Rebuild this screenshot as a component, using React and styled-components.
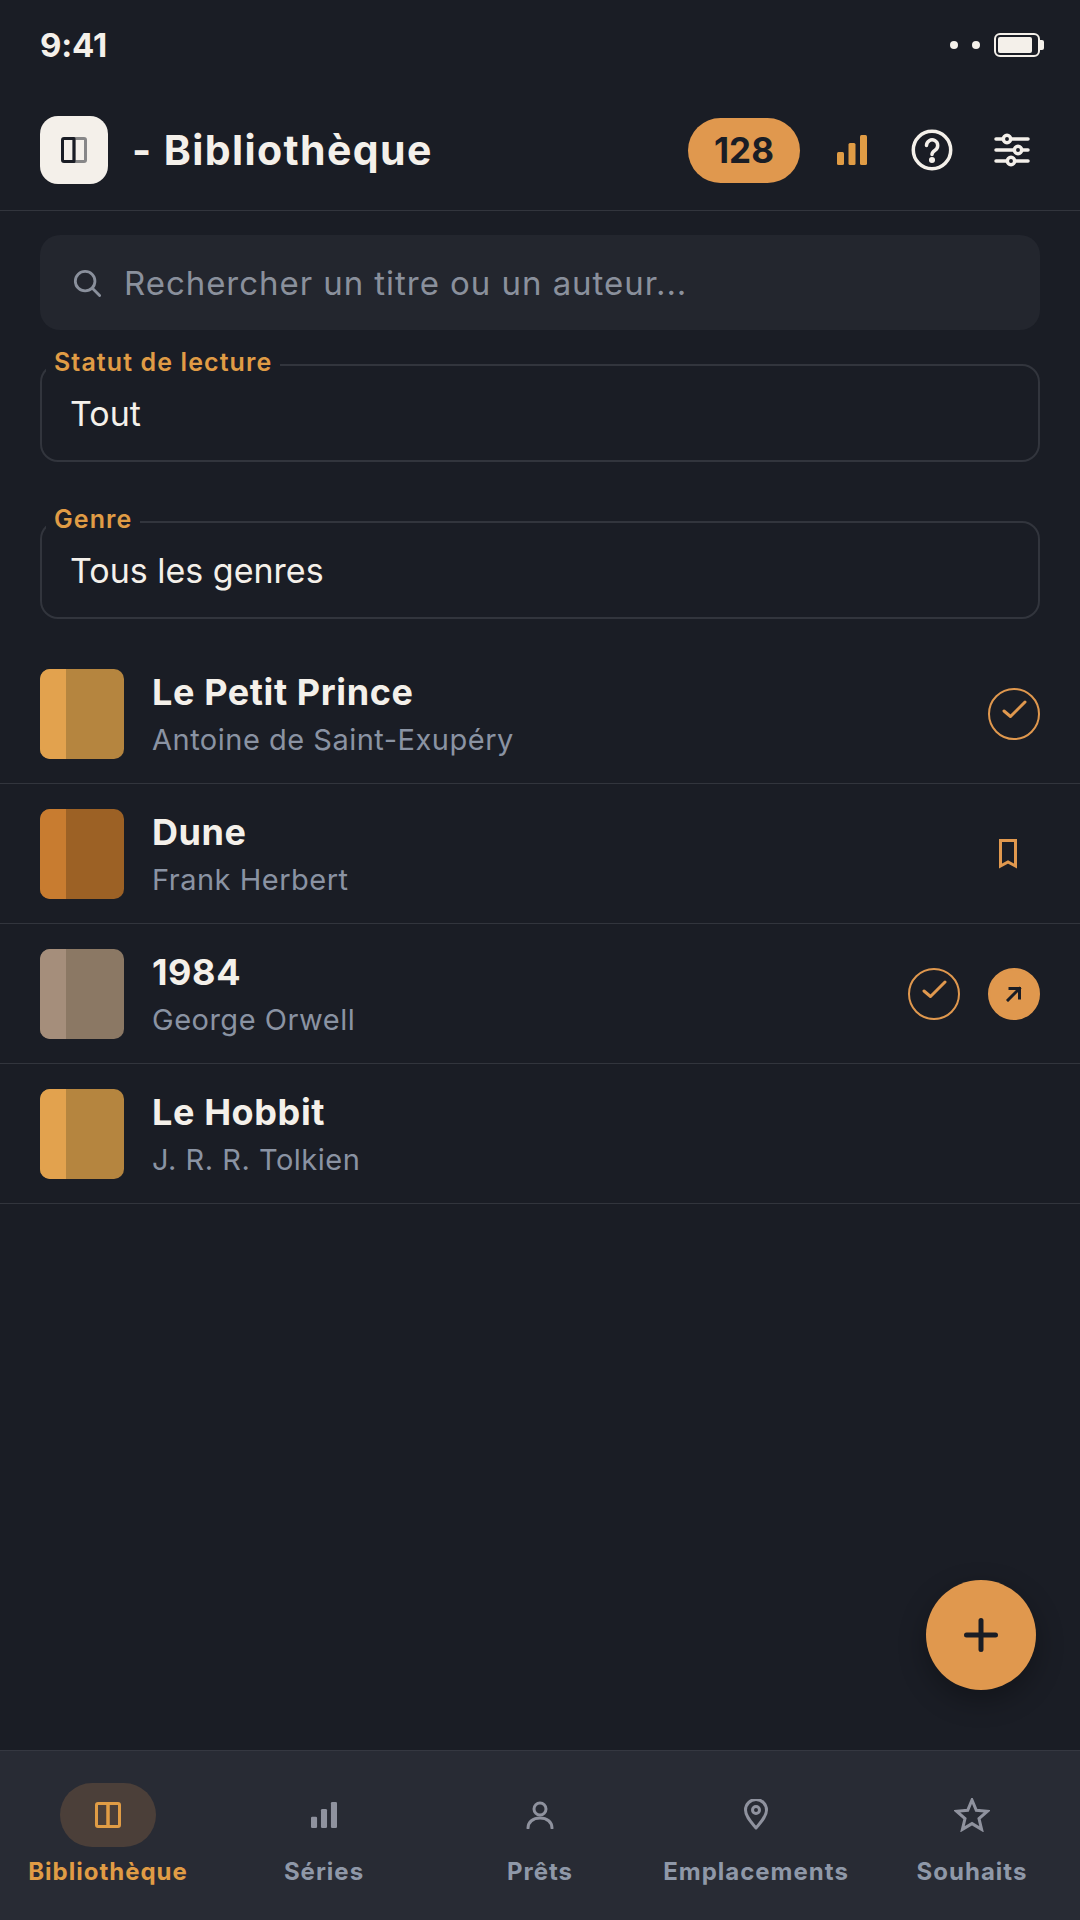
import React from 'react'
import styled, { createGlobalStyle } from 'styled-components'

const GlobalStyle = createGlobalStyle`
html, body {
    margin: 0;
    padding: 0;
    background: #1a1d25;
}
* {
    box-sizing: border-box;
}
`

const Screen = styled.div`
position: relative;
width: 1080px;
height: 1920px;
display: flex;
flex-direction: column;
overflow: hidden;
background-color: #1a1d25;
color: #f4f0ea;
font-family: Inter, "Noto Sans", sans-serif;
`

const StatusBar = styled.div`
height: 90px;
padding: 0 40px;
display: flex;
align-items: center;
justify-content: space-between;
`
const Time = styled.span`
font-size: 33px;
font-weight: 700;
letter-spacing: -0.2px;
`
const StatusRight = styled.div`
display: flex;
align-items: center;
gap: 14px;
`
const Dot = styled.span`
width: 8px;
height: 8px;
border-radius: 50%;
background-color: #f4f0ea;
`
const Battery = styled.span`
position: relative;
width: 46px;
height: 24px;
padding: 2px;
border: 2px solid #f4f0ea;
border-radius: 6px;
&::before {
    content: '';
    display: block;
    height: 100%;
    width: 34px;
    border-radius: 2px;
    background-color: #f4f0ea;
}
&::after {
    content: '';
    position: absolute;
    top: 5px;
    right: -6px;
    width: 4px;
    height: 10px;
    border-radius: 0 2px 2px 0;
    background-color: #f4f0ea;
}
`

const Header = styled.header`
height: 121px;
padding: 26px 40px 0;
display: flex;
align-items: flex-start;
border-bottom: 1px solid #32353d;
`
const Logo = styled.div`
width: 68px;
height: 68px;
border-radius: 18px;
display: flex;
align-items: center;
justify-content: center;
background-color: #f4f0ea;
`
const PageTitle = styled.h1`
flex: 1;
margin: 0 0 0 24px;
font-size: 41px;
line-height: 68px;
font-weight: 700;
letter-spacing: 1.4px;
`
const HeaderActions = styled.div`
display: flex;
align-items: center;
gap: 24px;
height: 68px;
`
const CountPill = styled.div`
width: 112px;
height: 65px;
border-radius: 33px;
display: flex;
align-items: center;
justify-content: center;
background-color: #e0984e;
color: #1a1d25;
font-size: 35px;
font-weight: 700;
`
const IconButton = styled.div`
width: 56px;
height: 56px;
display: flex;
align-items: center;
justify-content: center;
`

const Filters = styled.section`
padding: 24px 40px 25px;
display: flex;
flex-direction: column;
`
const Search = styled.div`
height: 95px;
margin-bottom: 20px;
padding: 0 33px;
display: flex;
align-items: center;
gap: 23px;
border-radius: 20px;
background-color: #23262e;
color: #8a909c;
font-size: 33px;
letter-spacing: 0.95px;
`
const Field = styled.fieldset`
margin: 0;
padding: 0 0 14px;
border: 2px solid #32353d;
border-radius: 18px;
& + & {
    margin-top: 45px;
}
`
const FieldLabel = styled.legend`
margin-left: 4px;
padding: 0 8px 6px;
font-size: 25px;
line-height: 24px;
font-weight: 600;
letter-spacing: 1.1px;
color: #e09c45;
`
const FieldValue = styled.div`
height: 66px;
padding-left: 28px;
display: flex;
align-items: center;
font-size: 34px;
color: #f4f0ea;
`

const BookList = styled.ul`
margin: 0;
padding: 0;
list-style: none;
`
const BookRow = styled.li`
height: 140px;
padding: 0 40px;
display: flex;
align-items: center;
gap: 28px;
border-bottom: 1px solid #32353d;
`
const Cover = styled.div`
width: 84px;
height: 90px;
flex-shrink: 0;
border-radius: 10px;
overflow: hidden;
display: flex;
background-color: ${props => props.$back};
&::before {
    content: '';
    width: 26px;
    background-color: ${props => props.$spine};
}
`
const BookText = styled.div`
flex: 1;
margin-top: 3px;
display: flex;
flex-direction: column;
gap: 4px;
`
const BookTitle = styled.div`
font-size: 36px;
line-height: 46px;
font-weight: 700;
letter-spacing: 0.6px;
`
const BookAuthor = styled.div`
font-size: 29px;
line-height: 42px;
letter-spacing: 0.5px;
color: #8a93a3;
`
const BookActions = styled.div`
display: flex;
align-items: center;
gap: 28px;
`
const RoundAction = styled.div`
width: 52px;
height: 52px;
border-radius: 50%;
display: flex;
align-items: center;
justify-content: center;
border: 2px solid #e0984e;
background-color: ${props => props.$filled ? '#e0984e' : 'transparent'};
`
const PlainAction = styled.div`
width: 64px;
height: 52px;
display: flex;
align-items: center;
justify-content: center;
`

const Fab = styled.button`
position: absolute;
right: 44px;
bottom: 230px;
width: 110px;
height: 110px;
padding: 0;
border: none;
border-radius: 50%;
display: flex;
align-items: center;
justify-content: center;
background-color: #e0984e;
box-shadow: 0 10px 28px rgba(0, 0, 0, 0.3);
`

const TabBar = styled.nav`
margin-top: auto;
height: 170px;
padding-top: 32px;
display: grid;
grid-template-columns: repeat(5, 216px);
border-top: 1px solid #353841;
background-color: #282b34;
`
const Tab = styled.div`
display: flex;
flex-direction: column;
align-items: center;
color: ${props => props.$active ? '#e09c45' : '#8f98a8'};
font-size: 24px;
line-height: 30px;
font-weight: 700;
letter-spacing: 1px;
white-space: nowrap;
`
const TabIcon = styled.div`
width: 96px;
height: 64px;
margin-bottom: 10px;
border-radius: 32px;
display: flex;
align-items: center;
justify-content: center;
background-color: ${props => props.$active ? '#4b3f39' : 'transparent'};
`

const SplitBook = ({ color, faded }) => (
    <svg width="28" height="28" viewBox="0 0 28 28" fill="none" stroke={color} strokeWidth="3" strokeLinejoin="round">
        <path d="M14 2.500H4a1.500 1.500 0 0 0-1.500 1.500v20a1.500 1.500 0 0 0 1.500 1.500h10z" />
        <path d="M14 2.500h10a1.500 1.500 0 0 1 1.500 1.500v20a1.500 1.500 0 0 1-1.500 1.500H14z" opacity={faded ? 0.5 : 1} />
    </svg>
)

const Bars = ({ color, size = 30 }) => (
    <svg width={size} height={size} viewBox="0 0 30 30" fill={color}>
        <rect x="0" y="17" width="7" height="13" rx="1.500" />
        <rect x="11.500" y="8" width="7" height="22" rx="1.500" />
        <rect x="23" y="0" width="7" height="30" rx="1.500" />
    </svg>
)

const Help = () => (
    <svg width="42" height="42" viewBox="0 0 42 42" fill="none" stroke="#f4f0ea" strokeWidth="3.500" strokeLinecap="round">
        <circle cx="21" cy="21" r="18.700" />
        <path d="M15.500 16.500a5.600 5.600 0 1 1 8.600 4.700c-1.900 1.200-3.100 2.300-3.100 4.300" />
        <circle cx="21" cy="31" r="1.300" fill="#f4f0ea" />
    </svg>
)

const Sliders = () => (
    <svg width="36" height="34" viewBox="0 0 36 34" fill="none" stroke="#f4f0ea" strokeWidth="3.500" strokeLinecap="round">
        <path d="M2 6h32M2 17h32M2 28h32" />
        <circle cx="13" cy="6" r="3.700" fill="#1a1d25" />
        <circle cx="24" cy="17" r="3.700" fill="#1a1d25" />
        <circle cx="17" cy="28" r="3.700" fill="#1a1d25" />
    </svg>
)

const SearchIcon = () => (
    <svg width="28" height="28" viewBox="0 0 30 30" fill="none" stroke="#8a909c" strokeWidth="3" strokeLinecap="round">
        <circle cx="13" cy="13" r="10.500" />
        <path d="M21 21l7.500 7.500" />
    </svg>
)

const Check = () => (
    <svg width="26" height="28" viewBox="0 0 26 28" fill="none" stroke="#e0984e" strokeWidth="3" strokeLinecap="round" strokeLinejoin="round">
        <path d="M3 11l6.500 5.500L24 2" />
    </svg>
)

const Bookmark = () => (
    <svg width="18" height="30" viewBox="0 0 18 30" fill="none" stroke="#e0984e" strokeWidth="3">
        <path d="M1.500 1.500h15v25.500L9 23l-7.500 4z" />
    </svg>
)

const Arrow = () => (
    <svg width="16" height="16" viewBox="0 0 16 16" fill="none" stroke="#1a1d25" strokeWidth="3" strokeLinecap="square">
        <path d="M2 14L13.500 2.500M4 2.500h9.500V12" />
    </svg>
)

const Plus = () => (
    <svg width="34" height="34" viewBox="0 0 34 34" fill="none" stroke="#1a1d25" strokeWidth="5" strokeLinecap="round">
        <path d="M17 2.500v29M2.500 17h29" />
    </svg>
)

const Person = () => (
    <svg width="28" height="28" viewBox="0 0 28 28" fill="none" stroke="#8f929e" strokeWidth="3" strokeLinecap="round">
        <circle cx="14" cy="8" r="6" />
        <path d="M2 27c0-6 5-10 12-10s12 4 12 10" />
    </svg>
)

const Pin = () => (
    <svg width="24" height="32" viewBox="0 1 24 32" fill="none" stroke="#8f929e" strokeWidth="3" strokeLinejoin="round">
        <path d="M12 30C7 24 1.500 18.500 1.500 12a10.500 10.500 0 0 1 21 0C22.500 18.500 17 24 12 30z" />
        <circle cx="12" cy="12" r="3.500" />
    </svg>
)

const Star = () => (
    <svg width="36" height="34" viewBox="0 1 36 34" fill="none" stroke="#8f929e" strokeWidth="3" strokeLinejoin="miter">
        <path d="M18 3l4.300 10.300 11.200.9-8.500 7.300 2.600 10.900L18 26.600 8.400 32.400 11 21.500 2.500 14.200l11.200-.9z" />
    </svg>
)

const books = [
    { title: 'Le Petit Prince', author: 'Antoine de Saint-Exupéry', spine: '#e2a24e', back: '#b5853f', done: true },
    { title: 'Dune', author: 'Frank Herbert', spine: '#c87c30', back: '#9c6125', saved: true },
    { title: '1984', author: 'George Orwell', spine: '#a58e7b', back: '#8b7864', done: true, lent: true },
    { title: 'Le Hobbit', author: 'J. R. R. Tolkien', spine: '#e2a24e', back: '#b5853f' },
]

const tabs = [
    { label: 'Bibliothèque', icon: <SplitBook color="#e09c45" />, active: true },
    { label: 'Séries', icon: <Bars color="#8f929e" size={26} /> },
    { label: 'Prêts', icon: <Person /> },
    { label: 'Emplacements', icon: <Pin /> },
    { label: 'Souhaits', icon: <Star /> },
]

const App = () => {
    return (
        <Screen>
            <GlobalStyle />
            <StatusBar>
                <Time>9:41</Time>
                <StatusRight>
                    <Dot />
                    <Dot />
                    <Battery />
                </StatusRight>
            </StatusBar>
            <Header>
                <Logo><SplitBook color="#1a1d25" faded /></Logo>
                <PageTitle>- Bibliothèque</PageTitle>
                <HeaderActions>
                    <CountPill>128</CountPill>
                    <IconButton><Bars color="#e09c45" /></IconButton>
                    <IconButton><Help /></IconButton>
                    <IconButton><Sliders /></IconButton>
                </HeaderActions>
            </Header>
            <Filters>
                <Search>
                    <SearchIcon />
                    Rechercher un titre ou un auteur...
                </Search>
                <Field>
                    <FieldLabel>Statut de lecture</FieldLabel>
                    <FieldValue>Tout</FieldValue>
                </Field>
                <Field>
                    <FieldLabel>Genre</FieldLabel>
                    <FieldValue>Tous les genres</FieldValue>
                </Field>
            </Filters>
            <BookList>
                {books.map(book => (
                    <BookRow key={book.title}>
                        <Cover $spine={book.spine} $back={book.back} />
                        <BookText>
                            <BookTitle>{book.title}</BookTitle>
                            <BookAuthor>{book.author}</BookAuthor>
                        </BookText>
                        <BookActions>
                            {book.done && <RoundAction><Check /></RoundAction>}
                            {book.saved && <PlainAction><Bookmark /></PlainAction>}
                            {book.lent && <RoundAction $filled><Arrow /></RoundAction>}
                        </BookActions>
                    </BookRow>
                ))}
            </BookList>
            <Fab><Plus /></Fab>
            <TabBar>
                {tabs.map(tab => (
                    <Tab key={tab.label} $active={tab.active}>
                        <TabIcon $active={tab.active}>{tab.icon}</TabIcon>
                        {tab.label}
                    </Tab>
                ))}
            </TabBar>
        </Screen>
    )
}

export default App
